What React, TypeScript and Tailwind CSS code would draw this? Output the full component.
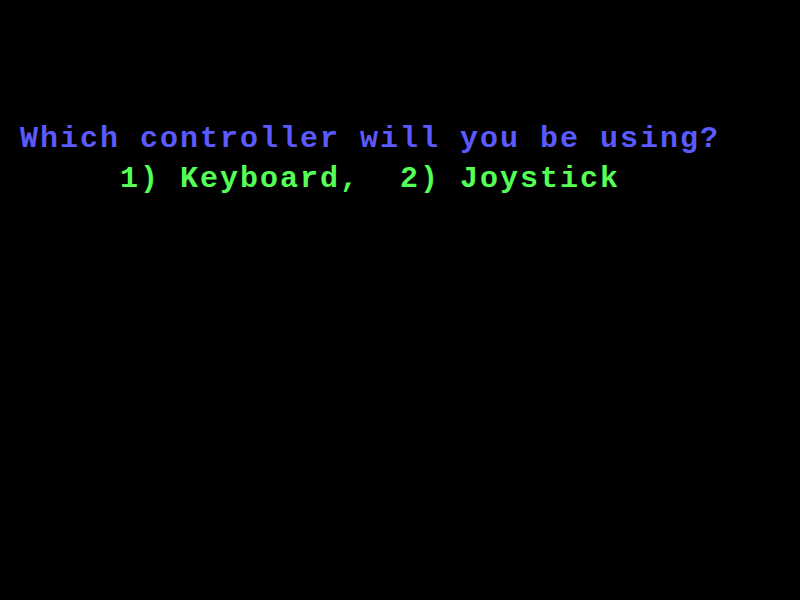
export default function App() {
  return (
    <div className="w-[800px] h-[600px] bg-black overflow-hidden">
      <div className="pt-[119px] pl-[20px] font-['Liberation_Mono',monospace] font-bold text-[30px] leading-[40px] tracking-[2px] whitespace-pre">
        <div className="text-[#5a5aff]">Which controller will you be using?</div>
        <div className="text-[#55ff55]">     1) Keyboard,  2) Joystick</div>
      </div>
    </div>
  )
}
